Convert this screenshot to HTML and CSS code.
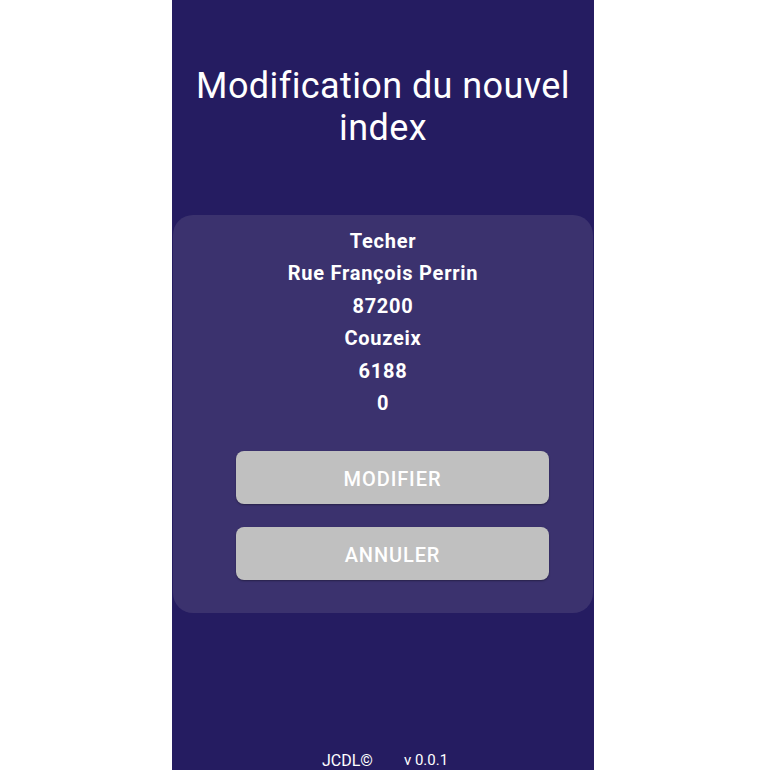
FILE: index.html
```html
<!DOCTYPE html>
<html lang="fr">
<head>
<meta charset="utf-8">
<title>Modification du nouvel index</title>
<link rel="stylesheet" href="styles.css">
</head>
<body>
<div class="screen">
  <h1 class="title">Modification du nouvel index</h1>
  <div class="card">
    <div class="info">
      <div class="line">Techer</div>
      <div class="line">Rue François Perrin</div>
      <div class="line">87200</div>
      <div class="line">Couzeix</div>
      <div class="line">6188</div>
      <div class="line">0</div>
    </div>
    <div class="actions">
      <button class="btn">MODIFIER</button>
      <button class="btn">ANNULER</button>
    </div>
  </div>
  <div class="footer">
    <span>JCDL©</span>
    <span class="version">v 0.0.1</span>
  </div>
</div>
</body>
</html>
```

FILE: styles.css
```css
html, body {
  margin: 0;
  padding: 0;
  background: #ffffff;
}
body {
  font-family: Roboto, "Noto Sans", sans-serif;
}
.screen {
  width: 422px;
  margin-left: 172px;
  min-height: 770px;
  background: #251c61;
  display: flex;
  flex-direction: column;
  color: #ffffff;
}
.title {
  margin: 65px 0 0;
  font-size: 36px;
  line-height: 42px;
  font-weight: 400;
  letter-spacing: 0.4px;
  text-align: center;
  padding: 0 20px;
}
.card {
  margin: 66px 1px 0;
  height: 398px;
  box-sizing: border-box;
  background: #3b326e;
  border-radius: 20px;
  padding: 10px 0 0;
  display: flex;
  flex-direction: column;
  align-items: center;
}
.info {
  text-align: center;
  font-weight: 700;
  font-size: 20px;
  line-height: 32.4px;
  letter-spacing: 0.75px;
}
.actions {
  margin-top: 32px;
  align-self: flex-start;
  margin-left: 63px;
  display: flex;
  flex-direction: column;
  gap: 23px;
}
.btn {
  width: 313px;
  height: 53px;
  border: none;
  border-radius: 8px;
  background: #c0c0c0;
  color: #ffffff;
  font-family: Roboto, "Noto Sans", sans-serif;
  font-size: 20px;
  font-weight: 500;
  letter-spacing: 0.9px;
  box-shadow: 0 1px 2px rgba(0, 0, 0, 0.35);
  padding: 2px 0 0;
  cursor: pointer;
}
.footer {
  margin-top: auto;
  display: flex;
  justify-content: flex-start;
  padding-left: 150px;
  gap: 31px;
  font-size: 16px;
  line-height: 19px;
}
.version {
  font-size: 15px;
}
```
